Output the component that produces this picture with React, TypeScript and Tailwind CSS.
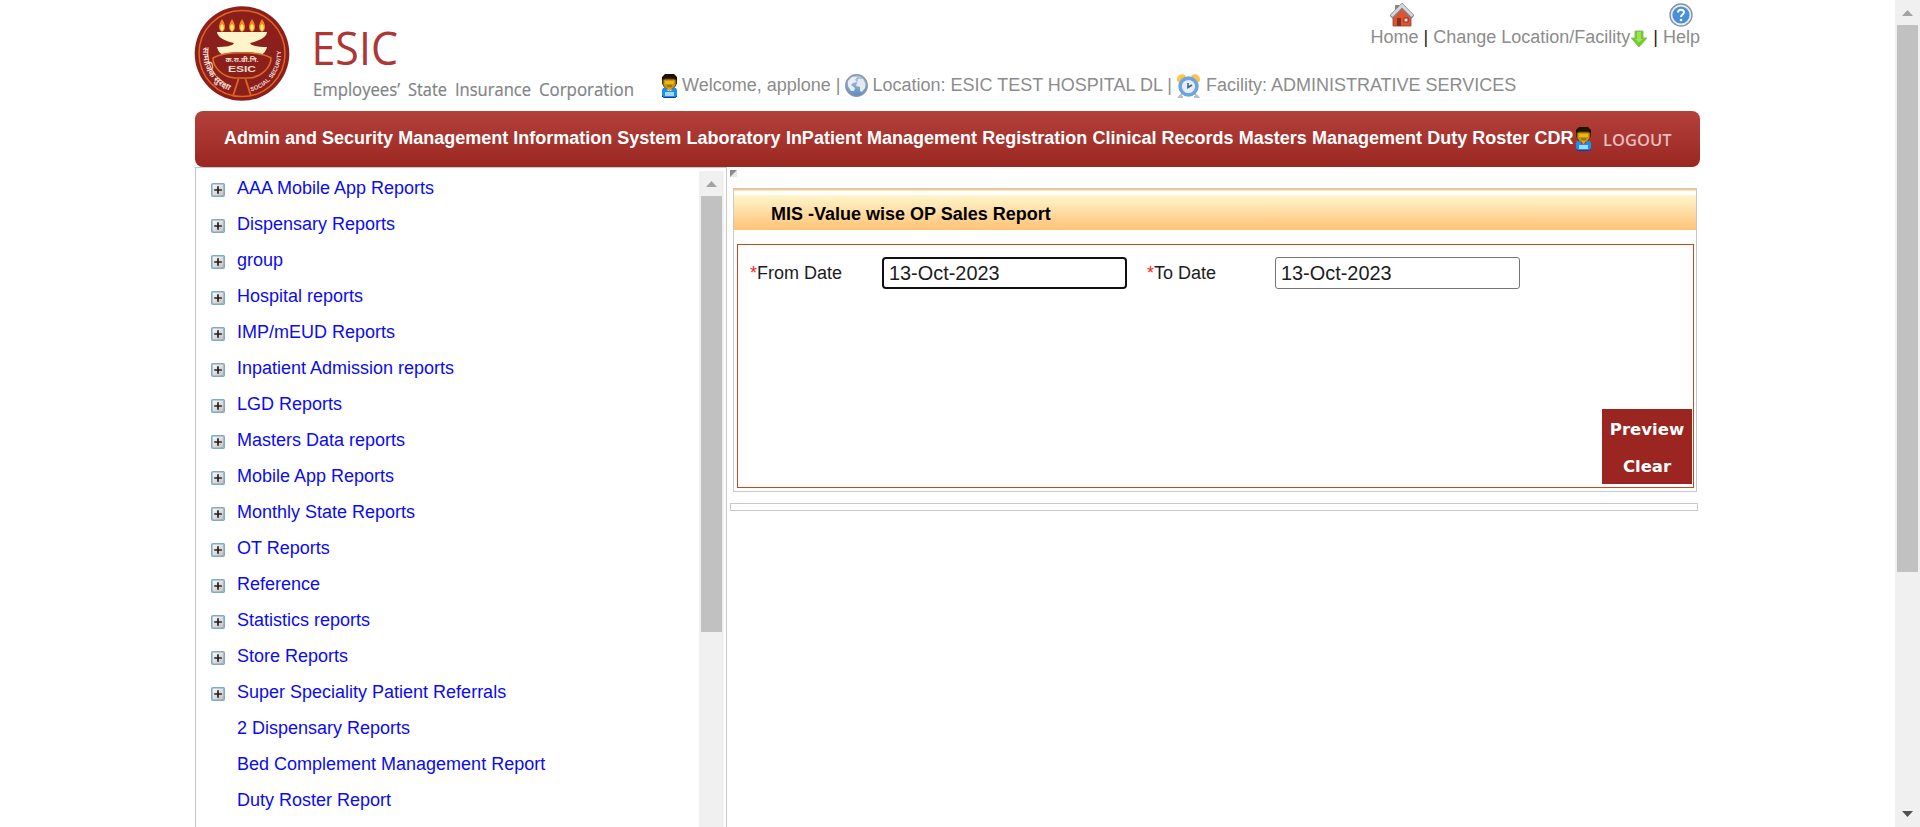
import React from "react";

const reports = [
  "AAA Mobile App Reports",
  "Dispensary Reports",
  "group",
  "Hospital reports",
  "IMP/mEUD Reports",
  "Inpatient Admission reports",
  "LGD Reports",
  "Masters Data reports",
  "Mobile App Reports",
  "Monthly State Reports",
  "OT Reports",
  "Reference",
  "Statistics reports",
  "Store Reports",
  "Super Speciality Patient Referrals",
];
const leaves = ["2 Dispensary Reports", "Bed Complement Management Report", "Duty Roster Report"];
const modules = [
  "Admin and Security",
  "Management Information System",
  "Laboratory",
  "InPatient Management",
  "Registration",
  "Clinical Records",
  "Masters",
  "Management",
  "Duty Roster",
  "CDR",
];

function Emblem() {
  return (
    <svg width="95" height="97" viewBox="0 0 95 97" className="shrink-0 overflow-visible">
      <defs>
        <path id="arcLeft" d="M8.600 42 A39 39 0 0 0 40 86.900" />
        <path id="arcRight" d="M56 86.400 A39 39 0 0 0 83.600 35" />
      </defs>
      <circle cx="47" cy="48.500" r="47.300" fill="#8a1f1b" />
      <circle cx="47" cy="48.500" r="43" fill="none" stroke="#e2661f" strokeWidth="1.500" />
      {[27, 37, 47, 57, 67].map((x) => (
        <g key={x}>
          <path d={`M${x} 14 C${x + 4} 20 ${x + 4} 25 ${x} 27 C${x - 4} 25 ${x - 4} 20 ${x} 14Z`} fill="#f58a1f" />
          <ellipse cx={x} cy="22.500" rx="1.600" ry="3.200" fill="#fff27a" />
        </g>
      ))}
      <path d="M22 27 H72 C72 32 64 36 55 38 C56 41 64 42 72 42 C71 46 69 49 65 50 C60 47 54 47 47 47 C40 47 34 47 29 50 C25 49 23 46 22 42 C30 42 38 41 39 38 C30 36 22 32 22 27Z" fill="#fff3cc" />
      <path d="M18 53 C29 46 65 46 76 53 C76 62 67 72 54 73 H40 C27 72 18 62 18 53Z" fill="#8a1f1b" stroke="#dc6b25" strokeWidth="1.600" />
      <text x="47" y="57" textAnchor="middle" fontSize="7" fontWeight="700" fill="#f5dccb" fontFamily="Noto Sans, sans-serif" textLength="33" lengthAdjust="spacingAndGlyphs">क.रा.बी.नि.</text>
      <text x="47" y="67" textAnchor="middle" fontSize="8.500" fontWeight="700" fill="#f5dccb" fontFamily="Liberation Sans, sans-serif" textLength="28" lengthAdjust="spacingAndGlyphs">ESIC</text>
      <path d="M43.500 74 L38 91 M50.500 74 L56 91" fill="none" stroke="#e2661f" strokeWidth="1.800" />
      <text fontSize="8.500" fontWeight="700" fill="#f3d9cf" fontFamily="Noto Sans, sans-serif">
        <textPath href="#arcLeft">सामाजिक सुरक्षा</textPath>
      </text>
      <text fontSize="6" fontWeight="700" fill="#f3d9cf" fontFamily="Liberation Sans, sans-serif">
        <textPath href="#arcRight">SOCIAL SECURITY</textPath>
      </text>
    </svg>
  );
}

function Wordmark() {
  return (
    <svg width="330" height="80" viewBox="0 0 330 80" className="shrink-0 overflow-visible" fontFamily="Open Sans, sans-serif">
      <text x="-3.500" y="41" fontSize="46" fill="#ae3735" textLength="86.500" lengthAdjust="spacingAndGlyphs">ESIC</text>
      <g fontSize="18" fill="#7f8487" stroke="#7f8487" strokeWidth="0.200">
        <text x="-2" y="72" textLength="87" lengthAdjust="spacingAndGlyphs">Employees’</text>
        <text x="93" y="72" textLength="39" lengthAdjust="spacingAndGlyphs">State</text>
        <text x="140" y="72" textLength="76" lengthAdjust="spacingAndGlyphs">Insurance</text>
        <text x="224" y="72" textLength="95" lengthAdjust="spacingAndGlyphs">Corporation</text>
      </g>
    </svg>
  );
}

function Person() {
  return (
    <svg width="15" height="24" viewBox="0 0 15 24" className="shrink-0">
      <path d="M3 0 H12 L15 3 V10 H0 V3Z" fill="#1c1200" />
      <path d="M1 6 L3 5 H12 L14 6 V11 L11 15 H4 L1 11Z" fill="#c99407" stroke="#5d4300" strokeWidth="1" />
      <path d="M3 7 H12 V10 H3Z" fill="#e8b81a" />
      <path d="M5 12 H10" stroke="#775400" />
      <path d="M1 14 H4 L6 17 H9 L11 14 H14 L15 16 V22 L13 24 H2 L0 22 V16Z" fill="#1e8cf0" />
      <path d="M3 18 H12 V22 H3Z" fill="#9ddcff" />
      <path d="M0 22 L2 23.500 H13 L15 22" fill="none" stroke="#063f9e" />
      <path d="M5 14 H10 L8 17 H7Z" fill="#d7a719" />
    </svg>
  );
}

function Globe() {
  return (
    <svg width="23" height="23" viewBox="0 0 23 23" className="shrink-0">
      <defs>
        <linearGradient id="sea" x1="0" y1="0" x2="0" y2="1">
          <stop offset="0" stopColor="#b9cae0" />
          <stop offset="1" stopColor="#5a8ac2" />
        </linearGradient>
      </defs>
      <circle cx="11.500" cy="11.500" r="10.700" fill="url(#sea)" stroke="#8796aa" strokeWidth="1.500" />
      <path d="M3 7 L7 3 L12 3 L10 6 L12 8 L8 9 L6 11 L10 14 L9 17 L6 17 L3 12Z" fill="#e9eff6" />
      <path d="M13 5 L18 5 L20.500 10 L20 14 L17 18 L15 17 L15 13 L11 12 L12 9Z" fill="#e2eaf4" />
    </svg>
  );
}

function Clock() {
  return (
    <svg width="23" height="24" viewBox="0 0 23 24" className="shrink-0">
      <path d="M0 7 C-1 1 5 -2 9 2 L3 9Z M23 7 C24 1 18 -2 14 2 L20 9Z" fill="#f7c64a" />
      <path d="M5 20 L2 23 H6 M18 20 L21 23 H17" stroke="#b9c0c5" strokeWidth="2" fill="none" />
      <circle cx="11.500" cy="12.500" r="8.400" fill="#e3eefa" stroke="#6ea3df" strokeWidth="3.600" />
      <path d="M11 9 V13.500 L15 11" fill="none" stroke="#48617e" strokeWidth="1.600" />
    </svg>
  );
}

function House() {
  return (
    <svg width="24" height="24" viewBox="0 0 24 24" className="mr-1">
      <path d="M5 2 H9 V8 H5Z" fill="#8f8580" />
      <path d="M3 13 L12 5 L21 13 V23 H3Z" fill="#dc5335" stroke="#9b3d2a" strokeWidth="0.800" />
      <path d="M7 15 H11 V23 H7Z" fill="#8a2d1c" />
      <path d="M14 15 H18 V19 H14Z" fill="#fbe3c8" stroke="#8a2d1c" />
      <path d="M1 14 L12 3 L23 14" fill="none" stroke="#808386" strokeWidth="4.600" />
      <path d="M1.500 13 L12 2.500 L22.500 13" fill="none" stroke="#d5d7d8" strokeWidth="2.800" />
    </svg>
  );
}

function HelpIcon() {
  return (
    <svg width="24" height="24" viewBox="0 0 24 24">
      <circle cx="12" cy="12" r="11" fill="#eaf0f6" stroke="#8593a2" strokeWidth="1.400" />
      <circle cx="12" cy="12" r="8.600" fill="#4a8fd8" />
      <path d="M9 9.600 C9 5.800 15 5.900 15 9.300 C15 11.500 12 11.400 12 14" fill="none" stroke="#fff" strokeWidth="2" />
      <circle cx="12" cy="17" r="1.300" fill="#fff" />
    </svg>
  );
}

function DownArrow() {
  return (
    <svg width="18" height="18" viewBox="0 0 18 18" className="mt-[3px] shrink-0">
      <path d="M5 1 H13 V8 H17 L9 17 L1 8 H5Z" fill="#6cc92a" stroke="#8fbf6b" strokeWidth="1" />
      <path d="M7 2 H11 V9 H13 L9 13 L5 9 H7Z" fill="#9be64b" />
    </svg>
  );
}

function Plus() {
  return (
    <svg width="14" height="14" viewBox="0 0 14 14" className="mt-[2px] shrink-0">
      <defs>
        <linearGradient id="plusFill" x1="0" y1="0" x2="1" y2="1">
          <stop offset="0" stopColor="#ffffff" />
          <stop offset="1" stopColor="#c3bdb0" />
        </linearGradient>
      </defs>
      <rect x="0.800" y="0.800" width="12.400" height="12.400" rx="1" fill="url(#plusFill)" stroke="#7fa9d0" strokeWidth="1.600" />
      <path d="M3.200 7 H10.800 M7 3.200 V10.800" stroke="#222" strokeWidth="1.700" />
    </svg>
  );
}

function Triangle({ down = false }: { down?: boolean }) {
  return (
    <svg width="11" height="6" viewBox="0 0 11 6">
      {down ? <path d="M0 0 H11 L5.500 6Z" fill="#505050" /> : <path d="M0 6 H11 L5.500 0Z" fill="#a3a3a3" />}
    </svg>
  );
}

export default function App() {
  return (
    <div className="flex h-[827px] w-[1920px] overflow-hidden bg-white font-['Liberation_Sans',Arial,sans-serif] text-[18px] leading-[21px] whitespace-nowrap">
      <div className="flex w-[1895px] shrink-0 flex-col pl-[195px]">
        <header className="flex h-[111px] w-[1505px] shrink-0 text-[#8c8c8c]">
          <div className="flex w-[467px] shrink-0 gap-[25px] pt-[5px]">
            <Emblem />
            <div className="pt-[19px]">
              <Wordmark />
            </div>
          </div>
          <div className="flex flex-1 flex-col">
            <div className="flex h-[74px] justify-end pt-[3px]">
              <a className="flex flex-col items-end">
                <House />
                <span>Home</span>
              </a>
              <span className="mx-[5px] mt-6 text-[#222]">|</span>
              <a className="mt-6 flex">
                Change Location/Facility
                <DownArrow />
              </a>
              <span className="mx-[5px] mt-6 text-[#222]">|</span>
              <a className="flex flex-col items-center">
                <HelpIcon />
                <span>Help</span>
              </a>
            </div>
            <div className="flex h-6 items-start">
              <Person />
              <span className="mt-px ml-[5px]">Welcome, applone |</span>
              <span className="ml-[5px] flex">
                <Globe />
                <span className="mt-px ml-1">Location: ESIC TEST HOSPITAL DL |</span>
              </span>
              <span className="ml-[5px] flex">
                <Clock />
                <span className="mt-px ml-[6px]">Facility: ADMINISTRATIVE SERVICES</span>
              </span>
            </div>
          </div>
        </header>

        <nav className="flex h-14 w-[1505px] shrink-0 items-start rounded-lg bg-linear-to-b from-[#b3413b] to-[#9b2621] pt-4 pl-[29px] font-bold text-white">
          <div className="flex w-[1352px] shrink-0 gap-[5.250px] pt-[1px]">
            {modules.map((m) => (
              <a key={m}>{m}</a>
            ))}
          </div>
          <Person />
          <span className="ml-[12px] pt-[2px] font-['Open_Sans',sans-serif] text-[16.500px] font-semibold text-[#e5bdbb]">LOGOUT</span>
        </nav>

        <div className="flex h-[660px] w-[1505px]">
          <aside className="flex w-[532px] shrink-0 border-x border-t border-[#c8c8c8] pt-[3px] pr-[2px]">
            <ul className="flex-1 pt-[7px] pl-[15px] text-[#0b0bef]">
              {reports.map((r) => (
                <li key={r} className="flex h-9 gap-3">
                  <span className="pt-[3px]">
                    <Plus />
                  </span>
                  <a>{r}</a>
                </li>
              ))}
              {leaves.map((r) => (
                <li key={r} className="h-9 pl-[26px]">
                  <a>{r}</a>
                </li>
              ))}
            </ul>
            <div className="flex w-[25px] flex-col items-center bg-[#f0f0f0] pt-[10px]">
              <Triangle />
              <div className="mt-[9px] h-[436px] w-[21px] bg-[#c1c1c1]" />
            </div>
          </aside>

          <main className="flex-1 pt-[3px] pl-[3px]">
            <svg width="7" height="7" viewBox="0 0 7 7" className="block">
              <path d="M0 0 H7 V7 H0Z" fill="#e8e8e8" />
              <path d="M0 0 H7 L0 7Z" fill="#8b8b8b" />
            </svg>
            <section className="mt-[11px] ml-[3px] h-[304px] w-[964px] border border-[#c9c9c9]">
              <div className="h-px bg-[#ffc578]" />
              <div className="h-px bg-[#ffe3b8]" />
              <h1 className="mt-1 h-[35px] bg-linear-to-b from-[#fff5cc] to-[#ffc276] pt-[9px] pl-[37px] font-bold text-black">
                MIS -Value wise OP Sales Report
              </h1>
              <div className="mt-[14px] ml-[3px] flex h-[244px] w-[957px] flex-col justify-between border border-[#c8481f] text-[#1c1c1c]">
                <div className="flex pt-3 pl-3">
                  <label className="w-[132px] pt-[6px]">
                    <span className="text-[#ff1a1a]">*</span>From Date
                  </label>
                  <input
                    className="h-8 w-[245px] rounded-[4px] border-2 border-[#101010] px-[5px] text-[19.900px] leading-7 outline-none"
                    defaultValue="13-Oct-2023"
                  />
                  <label className="ml-5 w-[128px] pt-[6px]">
                    <span className="text-[#ff1a1a]">*</span>To Date
                  </label>
                  <input
                    className="h-8 w-[245px] rounded-[3px] border border-[#767676] px-[5px] text-[19.900px] leading-7 outline-none"
                    defaultValue="13-Oct-2023"
                  />
                </div>
                <div className="mr-px mb-[3px] flex h-[75px] w-[90px] flex-col items-center self-end bg-[#9b2621] pt-[10px] font-['DejaVu_Sans',Verdana,sans-serif] text-[16.500px] font-bold text-white">
                  <button className="mb-4 h-[21px] leading-[21px]">Preview</button>
                  <button className="h-[21px] leading-[21px]">Clear</button>
                </div>
              </div>
            </section>
            <div className="mt-[11px] h-2 w-[968px] border border-[#c9c9c9]" />
          </main>
        </div>
      </div>

      <div className="flex w-[25px] shrink-0 flex-col items-center bg-[#f0f0f0] pt-[10px]">
        <Triangle />
        <div className="mt-[9px] h-[547px] w-[21px] bg-[#c1c1c1]" />
        <div className="mt-auto mb-[10px] flex">
          <Triangle down />
        </div>
      </div>
    </div>
  );
}
